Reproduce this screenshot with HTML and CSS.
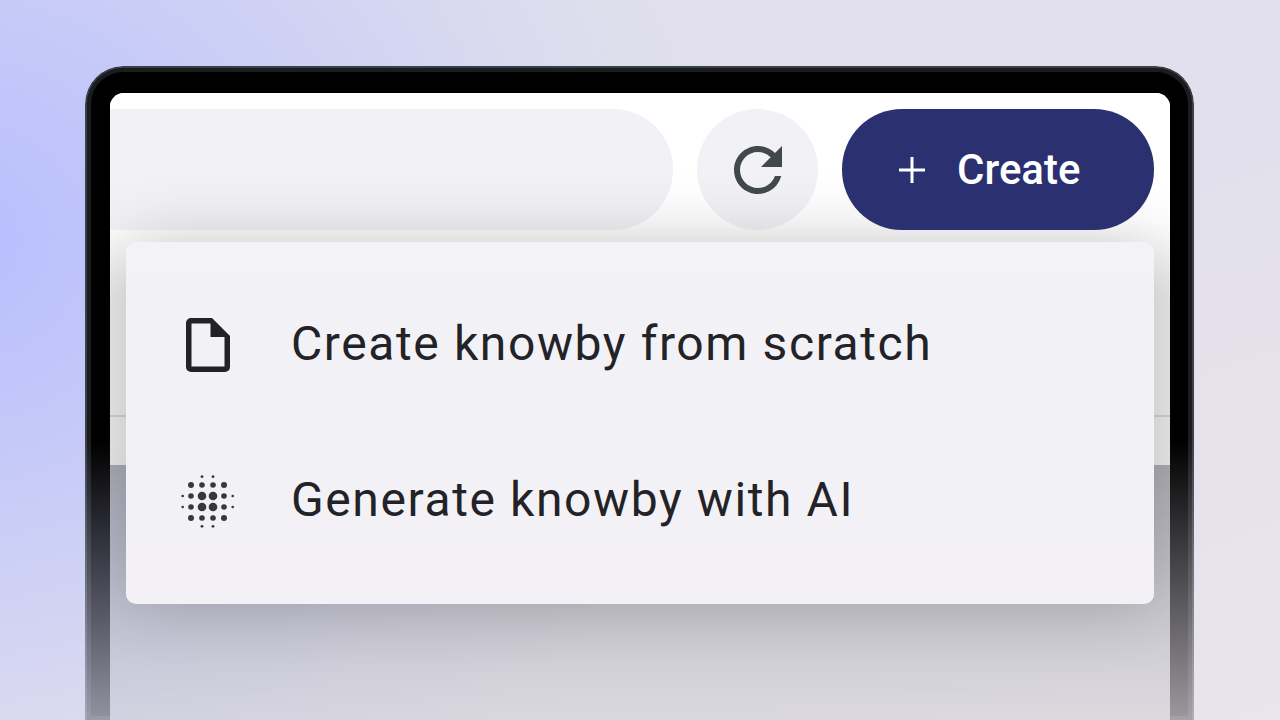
FILE: index.html
```html
<!DOCTYPE html>
<html lang="en">
<head>
    <meta charset="UTF-8">
    <meta name="viewport" content="width=device-width, initial-scale=1.0">
    <title>Create knowby</title>
    <link rel="stylesheet" href="styles.css">
</head>
<body>
    <div class="stage">
        <!-- frame and page behind the menu, fades out at the bottom -->
        <div class="device">
            <div class="screen">
                <div class="top-area"></div>
                <div class="spacer"></div>
                <div class="scrim"></div>
            </div>
        </div>

        <div class="overlay">
            <div class="toolbar">
                <div class="search"></div>
                <button class="refresh" type="button" aria-label="Refresh">
                    <svg width="72" height="72" viewBox="0 0 24 24"><path d="M17.65 6.35C16.2 4.9 14.21 4 12 4c-4.42 0-7.99 3.58-7.99 8s3.57 8 7.99 8c3.73 0 6.84-2.55 7.73-6h-2.08c-.82 2.33-3.04 4-5.65 4-3.31 0-6-2.69-6-6s2.69-6 6-6c1.66 0 3.14.69 4.22 1.78L13 11h7V4l-2.35 2.35z"/></svg>
                </button>
                <button class="create" type="button">
                    <svg width="26" height="26" viewBox="0 0 26 26"><path d="M13 0v26M0 13h26"/></svg>
                    <span>Create</span>
                </button>
            </div>

            <div class="menu">
                <div class="menu-item">
                    <span class="menu-icon">
                        <svg width="46" height="56" viewBox="0 0 46 56"><path fill-rule="evenodd" d="M6 1H27L45 19V50a5 5 0 0 1-5 5H6a5 5 0 0 1-5-5V6a5 5 0 0 1 5-5ZM6.500 6.500V49.500H39.500V20H25.500V6.500Z"/></svg>
                    </span>
                    <span>Create knowby from scratch</span>
                </div>
                <div class="menu-item">
                    <span class="menu-icon">
                        <svg class="dots" width="54" height="54" viewBox="0 0 54 54">
                            <circle cx="21" cy="2.700" r="1.400"/><circle cx="32" cy="2.700" r="1.400"/>
                            <circle cx="10" cy="11" r="3"/><circle cx="21" cy="11" r="2.800"/><circle cx="32" cy="11" r="2.800"/><circle cx="43" cy="11" r="3"/>
                            <circle cx="1.700" cy="22" r="1.300"/><circle cx="10" cy="22" r="2.800"/><circle cx="21" cy="22" r="4.300"/><circle cx="32" cy="22" r="4.300"/><circle cx="43" cy="22" r="2.800"/><circle cx="51.700" cy="22" r="1.300"/>
                            <circle cx="1.700" cy="33" r="1.300"/><circle cx="10" cy="33" r="2.800"/><circle cx="21" cy="33" r="4.300"/><circle cx="32" cy="33" r="4.300"/><circle cx="43" cy="33" r="2.800"/><circle cx="51.700" cy="33" r="1.300"/>
                            <circle cx="10" cy="44" r="3"/><circle cx="21" cy="44" r="2.800"/><circle cx="32" cy="44" r="2.800"/><circle cx="43" cy="44" r="3"/>
                            <circle cx="21" cy="52.300" r="1.400"/><circle cx="32" cy="52.300" r="1.400"/>
                        </svg>
                    </span>
                    <span>Generate knowby with AI</span>
                </div>
            </div>
        </div>
    </div>
</body>
</html>
```

FILE: styles.css
```css
html, body {
    height: 100%;
}
body {
    margin: 0;
    overflow: hidden;
    font-family: Roboto, Arial, sans-serif;
    background:
        radial-gradient(ellipse 800px 680px at -60px 240px, #b6bdff 0%, rgba(182,189,255,0.62) 35%, rgba(182,189,255,0.12) 80%, rgba(182,189,255,0) 100%),
        linear-gradient(160deg, #e1e0ec 0%, #e2e0ec 50%, #eae5ec 100%);
}
.stage {
    position: relative;
    width: 1109px;
    height: 654px;
    margin: 66px 0 0 85px;
}
.device {
    box-sizing: border-box;
    height: 654px;
    padding: 25px 22px 0 23px;
    background: #000;
    border: 2px solid #3a4048;
    border-bottom: 0;
    border-radius: 38px 38px 0 0;
    box-shadow: inset 0 0 0 4px #1a1c1f;
    -webkit-mask-image: linear-gradient(to bottom, #000 0, #000 374px, rgba(0,0,0,0.33) 654px);
    mask-image: linear-gradient(to bottom, #000 0, #000 374px, rgba(0,0,0,0.33) 654px);
}
.screen {
    display: flex;
    flex-direction: column;
    height: 627px;
    background: #fff;
    border-radius: 14px 14px 0 0;
    overflow: hidden;
}
.top-area {
    box-sizing: border-box;
    height: 324px;
    border-bottom: 2px solid #cfcfd7;
    background: linear-gradient(to bottom, #fff 130px, #ececec 200px);
}
.spacer {
    height: 48px;
    background: #ececec;
}
.scrim {
    flex: 1;
    background: linear-gradient(to bottom, #a8a8b2, #c0c0c4);
}
/* same box as .screen, keeps the menu shadow off the frame */
.overlay {
    position: absolute;
    top: 27px;
    left: 25px;
    width: 1060px;
    height: 627px;
    border-radius: 14px 14px 0 0;
    overflow: hidden;
}
.toolbar {
    display: flex;
    align-items: center;
    gap: 24px;
    padding: 16px 16px 0 0;
}
.search {
    flex: 1;
    height: 121px;
    background: #f2f2f6;
    border-radius: 0 60px 60px 0;
}
.refresh {
    display: flex;
    align-items: center;
    justify-content: center;
    width: 121px;
    height: 121px;
    padding: 0;
    border: none;
    border-radius: 50%;
    background: #f2f2f6;
}
.refresh svg {
    fill: #43484d;
}
.create {
    position: relative;
    z-index: 2;
    display: flex;
    align-items: center;
    gap: 32px;
    width: 312px;
    height: 121px;
    padding: 0 0 0 57px;
    border: none;
    border-radius: 60px;
    background: #2a3070;
    color: #fff;
    font-family: Roboto, Arial, sans-serif;
    font-size: 42px;
    font-weight: 500;
}
.create svg {
    stroke: #fff;
    stroke-width: 3;
}
.menu {
    position: absolute;
    top: 149px;
    left: 16px;
    right: 16px;
    z-index: 1;
    box-sizing: border-box;
    height: 362px;
    padding: 23px 0 27px;
    background: linear-gradient(to bottom, #f2f2f7, #f3f1f5);
    border-radius: 10px;
    box-shadow: 0 0 70px rgba(0,0,0,0.2);
}
.menu-item {
    display: flex;
    align-items: center;
    gap: 56px;
    height: 156px;
    padding-left: 55px;
    color: #232327;
    font-size: 48px;
    letter-spacing: 1.6px;
}
.menu-icon {
    display: flex;
    align-items: center;
    justify-content: center;
    width: 54px;
    margin-top: 3px;
}
.menu-icon svg {
    fill: #222327;
}
.menu-icon .dots {
    fill: #38383c;
}
```
